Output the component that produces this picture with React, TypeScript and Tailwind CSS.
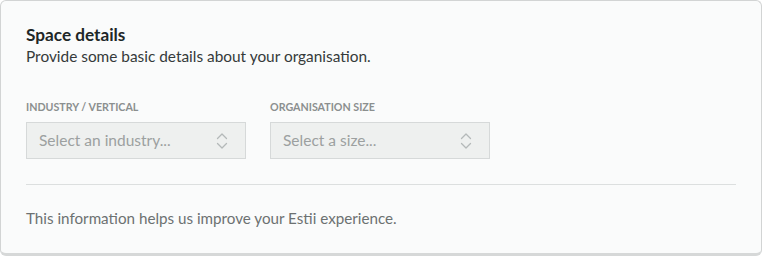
import React from "react";

function Chevrons() {
  return (
    <svg width="12" height="18" viewBox="0 0 12 18" fill="none" stroke="#b4b9b9" strokeWidth="1.3" strokeLinecap="round" strokeLinejoin="round">
      <path d="M1.5 6.5 L6 2 L10.5 6.5" />
      <path d="M1.5 11.5 L6 16 L10.5 11.5" />
    </svg>
  );
}

function Field({ label, placeholder }: { label: string; placeholder: string }) {
  return (
    <div className="flex flex-col w-[220px]">
      <div className="text-[10.7px] font-bold text-[#8b8f8f] leading-[14px] h-[14px]">{label}</div>
      <div className="mt-[8px] h-[37px] flex items-center justify-between pl-[12px] pr-[17px] bg-[#eef0ef] border border-[#d6d9d9] text-[15.5px] text-[#9ca0a0]">
        <span>{placeholder}</span>
        <Chevrons />
      </div>
    </div>
  );
}

export default function App() {
  return (
    <div className="w-[762px] h-[256px] bg-white" style={{ fontFamily: "Lato, 'Noto Sans', sans-serif" }}>
      <div className="w-full h-full rounded-[6px] border border-[#d2d4d4] border-b-[3px] border-b-[#d6d8d8] bg-[#fafbfb] px-[25px] pt-[23px] flex flex-col">
        <div className="text-[17.2px] font-bold text-[#1e2727] leading-[22px]">Space details</div>
        <div className="text-[15.4px] text-[#353a3a] leading-[20px]">Provide some basic details about your organisation.</div>
        <div className="mt-[34px] flex gap-[24px]">
          <Field label="INDUSTRY / VERTICAL" placeholder="Select an industry..." />
          <Field label="ORGANISATION SIZE" placeholder="Select a size..." />
        </div>
        <div className="mt-[25px] border-t border-[#dcdfdf]" />
        <div className="mt-[23px] text-[15.2px] text-[#6c7171] leading-[20px]">This information helps us improve your Estii experience.</div>
      </div>
    </div>
  );
}
